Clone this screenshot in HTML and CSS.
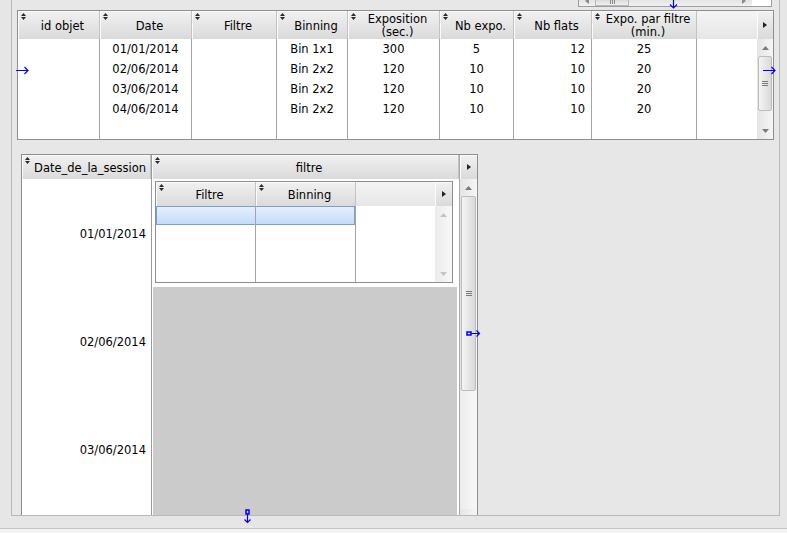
FILE: index.html
```html
<!DOCTYPE html>
<html>
<head>
<meta charset="utf-8">
<title>Sessions</title>
<link rel="stylesheet" href="styles.css">
</head>
<body>
<div class="panel">
  <div class="hfrag">
    <div class="hfrag-track">
      <div class="ha"><svg width="4" height="6" viewBox="0 0 4 6"><path d="M4 0L0 3L4 6Z" fill="#8a8a8a"/></svg></div>
      <div class="hthumb"><svg width="5" height="4" viewBox="0 0 5 4"><path d="M0.5 0V4M2.5 0V4M4.5 0V4" stroke="#8a8a8a" stroke-width="1"/></svg></div>
      <div class="hspace"></div>
      <div class="ha"><svg width="4" height="6" viewBox="0 0 4 6"><path d="M0 0L4 3L0 6Z" fill="#8a8a8a"/></svg></div>
    </div>
    <div class="hfrag-blank"></div>
  </div>

  <div class="grid1">
    <div class="g1-main">
      <div class="hc"><svg class="si" width="5" height="7" viewBox="0 0 5 7"><path d="M0 3L2.5 0L5 3Z M0 4H5L2.5 7Z" fill="#2a2a2a"/></svg>id objet</div>
      <div class="hc"><svg class="si" width="5" height="7" viewBox="0 0 5 7"><path d="M0 3L2.5 0L5 3Z M0 4H5L2.5 7Z" fill="#2a2a2a"/></svg>Date</div>
      <div class="hc"><svg class="si" width="5" height="7" viewBox="0 0 5 7"><path d="M0 3L2.5 0L5 3Z M0 4H5L2.5 7Z" fill="#2a2a2a"/></svg>Filtre</div>
      <div class="hc"><svg class="si" width="5" height="7" viewBox="0 0 5 7"><path d="M0 3L2.5 0L5 3Z M0 4H5L2.5 7Z" fill="#2a2a2a"/></svg>Binning</div>
      <div class="hc"><svg class="si" width="5" height="7" viewBox="0 0 5 7"><path d="M0 3L2.5 0L5 3Z M0 4H5L2.5 7Z" fill="#2a2a2a"/></svg>Exposition<br>(sec.)</div>
      <div class="hc"><svg class="si" width="5" height="7" viewBox="0 0 5 7"><path d="M0 3L2.5 0L5 3Z M0 4H5L2.5 7Z" fill="#2a2a2a"/></svg>Nb expo.</div>
      <div class="hc"><svg class="si" width="5" height="7" viewBox="0 0 5 7"><path d="M0 3L2.5 0L5 3Z M0 4H5L2.5 7Z" fill="#2a2a2a"/></svg>Nb flats</div>
      <div class="hc"><svg class="si" width="5" height="7" viewBox="0 0 5 7"><path d="M0 3L2.5 0L5 3Z M0 4H5L2.5 7Z" fill="#2a2a2a"/></svg>Expo. par filtre<br>(min.)</div>
      <div class="hc hc-fill"></div>

      <div class="bc"></div>
      <div class="bc"><div class="r">01/01/2014</div><div class="r">02/06/2014</div><div class="r">03/06/2014</div><div class="r">04/06/2014</div></div>
      <div class="bc"></div>
      <div class="bc"><div class="r">Bin 1x1</div><div class="r">Bin 2x2</div><div class="r">Bin 2x2</div><div class="r">Bin 2x2</div></div>
      <div class="bc"><div class="r">300</div><div class="r">120</div><div class="r">120</div><div class="r">120</div></div>
      <div class="bc"><div class="r">5</div><div class="r">10</div><div class="r">10</div><div class="r">10</div></div>
      <div class="bc bc-right"><div class="r">12</div><div class="r">10</div><div class="r">10</div><div class="r">10</div></div>
      <div class="bc"><div class="r">25</div><div class="r">20</div><div class="r">20</div><div class="r">20</div></div>
      <div class="bc bc-fill"></div>
    </div>
    <div class="vs vs1">
      <div class="vs-head vs1-head"><svg width="4" height="6" viewBox="0 0 4 6"><path d="M0 0L4 3L0 6Z" fill="#222"/></svg></div>
      <div class="vs-btn"><svg width="7" height="4" viewBox="0 0 7 4"><path d="M0 4L3.5 0L7 4Z" fill="#7a7a7a"/></svg></div>
      <div class="vs-thumb vs1-thumb"><svg width="6" height="5" viewBox="0 0 6 5"><path d="M0 0.5H6M0 2.5H6M0 4.5H6" stroke="#7a7a7a" stroke-width="1"/></svg></div>
      <div class="vs-space"></div>
      <div class="vs-btn"><svg width="7" height="4" viewBox="0 0 7 4"><path d="M0 0L7 0L3.5 4Z" fill="#7a7a7a"/></svg></div>
    </div>
  </div>

  <div class="grid2">
    <div class="c1">
      <div class="hc hc2"><svg class="si" width="5" height="7" viewBox="0 0 5 7"><path d="M0 3L2.5 0L5 3Z M0 4H5L2.5 7Z" fill="#2a2a2a"/></svg>Date_de_la_session</div>
      <div class="sr">01/01/2014</div>
      <div class="sr">02/06/2014</div>
      <div class="sr">03/06/2014</div>
    </div>
    <div class="c2">
      <div class="hc hc2"><svg class="si" width="5" height="7" viewBox="0 0 5 7"><path d="M0 3L2.5 0L5 3Z M0 4H5L2.5 7Z" fill="#2a2a2a"/></svg>filtre</div>
      <div class="c2-row">
        <div class="ig">
          <div class="ig-main">
            <div class="hc hc3"><svg class="si" width="5" height="7" viewBox="0 0 5 7"><path d="M0 3L2.5 0L5 3Z M0 4H5L2.5 7Z" fill="#2a2a2a"/></svg>Filtre</div>
            <div class="hc hc3"><svg class="si" width="5" height="7" viewBox="0 0 5 7"><path d="M0 3L2.5 0L5 3Z M0 4H5L2.5 7Z" fill="#2a2a2a"/></svg>Binning</div>
            <div class="hc hc3 hc-fill"></div>
            <div class="ibc"><div class="sel sel-l"></div></div>
            <div class="ibc"><div class="sel sel-r"></div></div>
            <div class="ibc ibc-fill"></div>
          </div>
          <div class="vs vs3">
            <div class="vs-head vs3-head"><svg width="4" height="6" viewBox="0 0 4 6"><path d="M0 0L4 3L0 6Z" fill="#222"/></svg></div>
            <div class="vs-btn"><svg width="7" height="4" viewBox="0 0 7 4"><path d="M0 4L3.5 0L7 4Z" fill="#c4c4c4"/></svg></div>
            <div class="vs-space"></div>
            <div class="vs-btn"><svg width="7" height="4" viewBox="0 0 7 4"><path d="M0 0L7 0L3.5 4Z" fill="#c4c4c4"/></svg></div>
          </div>
        </div>
      </div>
      <div class="greyarea"></div>
    </div>
    <div class="vs vs2">
      <div class="vs-head vs2-head"><svg width="4" height="6" viewBox="0 0 4 6"><path d="M0 0L4 3L0 6Z" fill="#222"/></svg></div>
      <div class="vs-btn"><svg width="7" height="4" viewBox="0 0 7 4"><path d="M0 4L3.5 0L7 4Z" fill="#7a7a7a"/></svg></div>
      <div class="vs-thumb vs2-thumb"><svg width="6" height="5" viewBox="0 0 6 5"><path d="M0 0.5H6M0 2.5H6M0 4.5H6" stroke="#7a7a7a" stroke-width="1"/></svg></div>
      <div class="vs-space vs2-space"></div>
      <div class="vs-btn"><svg width="7" height="4" viewBox="0 0 7 4"><path d="M0 0L7 0L3.5 4Z" fill="#7a7a7a"/></svg></div>
    </div>
  </div>
</div>
<div class="statusbar"></div>
<div class="foot"></div>

<svg class="ov ov-a1" width="9" height="10" viewBox="0 0 9 10"><path d="M4.5 0V9M1 5.5L4.5 9L8 5.5" stroke="#0000ff" stroke-width="1.2" fill="none"/></svg>
<svg class="ov ov-a2" width="13" height="9" viewBox="0 0 13 9"><path d="M0 4.5H12M8.5 1L12 4.5L8.5 8" stroke="#0000ff" stroke-width="1.2" fill="none"/></svg>
<svg class="ov ov-a3" width="13" height="9" viewBox="0 0 13 9"><path d="M0 4.5H12M8.5 1L12 4.5L8.5 8" stroke="#0000ff" stroke-width="1.2" fill="none"/></svg>
<svg class="ov ov-a4" width="15" height="9" viewBox="0 0 15 9"><rect x="1" y="3" width="4" height="3" stroke="#0000ff" stroke-width="1.5" fill="none"/><path d="M5 4.5H13.5M10.5 1.5L13.5 4.5L10.5 7.5" stroke="#0000ff" stroke-width="1.2" fill="none"/></svg>
<svg class="ov ov-a5" width="9" height="15" viewBox="0 0 9 15"><rect x="3" y="1" width="3" height="4" stroke="#0000ff" stroke-width="1.5" fill="none"/><path d="M4.5 5V13.5M1.5 10.5L4.5 13.5L7.5 10.5" stroke="#0000ff" stroke-width="1.2" fill="none"/></svg>
</body>
</html>
```

FILE: styles.css
```css
* { box-sizing: border-box; }
html, body { margin: 0; padding: 0; }
body {
  background: #e6e6e6;
  font-family: "DejaVu Sans", Verdana, sans-serif;
  font-size: 11.5px;
  color: #000;
  width: 787px;
  height: 533px;
  overflow: hidden;
  position: relative;
}

.panel {
  margin-left: 11px;
  width: 769px;
  height: 516px;
  border: 1px solid #b9b9b9;
  border-top: none;
  overflow: hidden;
  background: #e7e7e7;
}

.statusbar { height: 13px; border-bottom: 1px solid #c2c2c2; }
.foot { height: 4px; background: #f3f3f3; }

/* horizontal scrollbar fragment on top */
.hfrag {
  margin-left: 566px;
  width: 194px;
  height: 7px;
  border: 1px solid #9c9c9c;
  border-top: none;
  display: flex;
  background: #fff;
}
.hfrag-track {
  width: 173px;
  display: flex;
  align-items: flex-start;
  background: linear-gradient(#e4e4e4, #f2f2f2);
}
.ha { width: 16px; height: 6px; display: flex; justify-content: center; align-items: flex-start; }
.ha svg { margin-top: -2px; }
.hthumb {
  width: 34px; height: 6px;
  border: 1px solid #b9b9b9; border-top: none;
  background: linear-gradient(#dcdcdc, #f0f0f0);
  display: flex; justify-content: center; align-items: flex-start;
}
.hspace { flex: 1; }
.hfrag-blank { flex: 1; }

/* top grid */
.grid1 {
  margin: 3px 0 0 5px;
  width: 757px;
  height: 130px;
  border: 1px solid #8d8d95;
  display: flex;
  background: #fff;
}
.g1-main {
  display: grid;
  grid-template-columns: 82px 92px 85px 71px 92px 74px 78px 105px 60px;
  grid-template-rows: 28px 100px;
}

.hc {
  position: relative;
  display: flex;
  align-items: center;
  justify-content: center;
  text-align: center;
  padding-left: 8px;
  padding-top: 2px;
  line-height: 13px;
  background: linear-gradient(#f1f1f1, #dadada);
  border-right: 1px solid #c3c3c3;
  box-shadow: inset 1px 1px 0 #fbfbfb;
  white-space: nowrap;
}
.hc-fill {
  border-right: none;
  background: linear-gradient(#f4f4f4, #e6e6e6);
  box-shadow: none;
}
.si { position: absolute; left: 3px; top: 2px; }

.bc { border-right: 1px solid #a4a4a4; }
.bc-fill { border-right: none; }
.r { height: 20px; line-height: 20px; text-align: center; white-space: nowrap; }
.bc-right .r { text-align: right; padding-right: 6px; }

/* scrollbars */
.vs {
  display: flex;
  flex-direction: column;
  background: linear-gradient(90deg, #e4e4e4, #f6f6f6);
}
.vs1 { width: 16px; }
.vs-head {
  display: flex; align-items: center; justify-content: center;
  background: linear-gradient(#f1f1f1, #dadada);
  box-shadow: inset 1px 1px 0 #fbfbfb;
}
.vs1-head { height: 28px; }
.vs-btn { height: 17px; display: flex; align-items: center; justify-content: center; }
.vs-thumb {
  margin: 0 1px;
  border: 1px solid #bcbcbc;
  border-radius: 2px;
  background: linear-gradient(90deg, #f4f4f4, #d9d9d9);
  display: flex; align-items: center; justify-content: center;
}
.vs1-thumb { height: 55px; }
.vs-space { flex: 1; }

/* bottom grid */
.grid2 {
  margin: 14px 0 0 9px;
  width: 457px;
  height: 372px;
  border: 1px solid #8d8d95;
  border-bottom: none;
  display: flex;
  background: #fff;
}
.c1 {
  width: 130px;
  border-right: 1px solid #9a9a9a;
  display: flex;
  flex-direction: column;
}
.hc2 { height: 24px; flex: none; }
.sr {
  height: 108px;
  display: flex;
  align-items: center;
  justify-content: flex-end;
  padding-right: 5px;
  padding-top: 1px;
  white-space: nowrap;
}
.c2 {
  width: 307px;
  display: flex;
  flex-direction: column;
}
.c2-row { height: 108px; padding: 2px 0 0 3px; flex: none; }
.greyarea { flex: 1; margin: 0 2px 0 1px; background: #cbcbcb; }

.vs2 { width: 18px; border-left: 1px solid #a8a8a8; }
.vs2-head { height: 24px; flex: none; }
.vs2-thumb { height: 195px; flex: none; }
.vs2-space { background: linear-gradient(90deg, #ececec, #f8f8f8); }

/* inner grid */
.ig {
  width: 298px;
  height: 102px;
  border: 1px solid #8d8d95;
  display: flex;
  background: #fff;
}
.ig-main {
  display: grid;
  grid-template-columns: 100px 100px 79px;
  grid-template-rows: 24px 76px;
}
.hc3 { height: 24px; }
.ibc { border-right: 1px solid #a4a4a4; }
.ibc-fill { border-right: none; }
.sel {
  height: 19px;
  background: linear-gradient(#e4effd, #c5dbf8);
  border-top: 1px solid #7d9fcc;
  border-bottom: 1px solid #7d9fcc;
}
.sel-l { border-left: 1px solid #7d9fcc; }
.sel-r { border-right: 1px solid #7d9fcc; }
.vs3 { width: 17px; background: linear-gradient(90deg, #ececec, #f8f8f8); }
.vs3-head { height: 24px; flex: none; }

/* designer anchors overlay */
.ov { position: absolute; }
.ov-a1 { left: 669px; top: -1px; }
.ov-a2 { left: 16px; top: 66px; }
.ov-a3 { left: 763px; top: 66px; }
.ov-a4 { left: 466px; top: 329px; }
.ov-a5 { left: 243px; top: 509px; }
```
